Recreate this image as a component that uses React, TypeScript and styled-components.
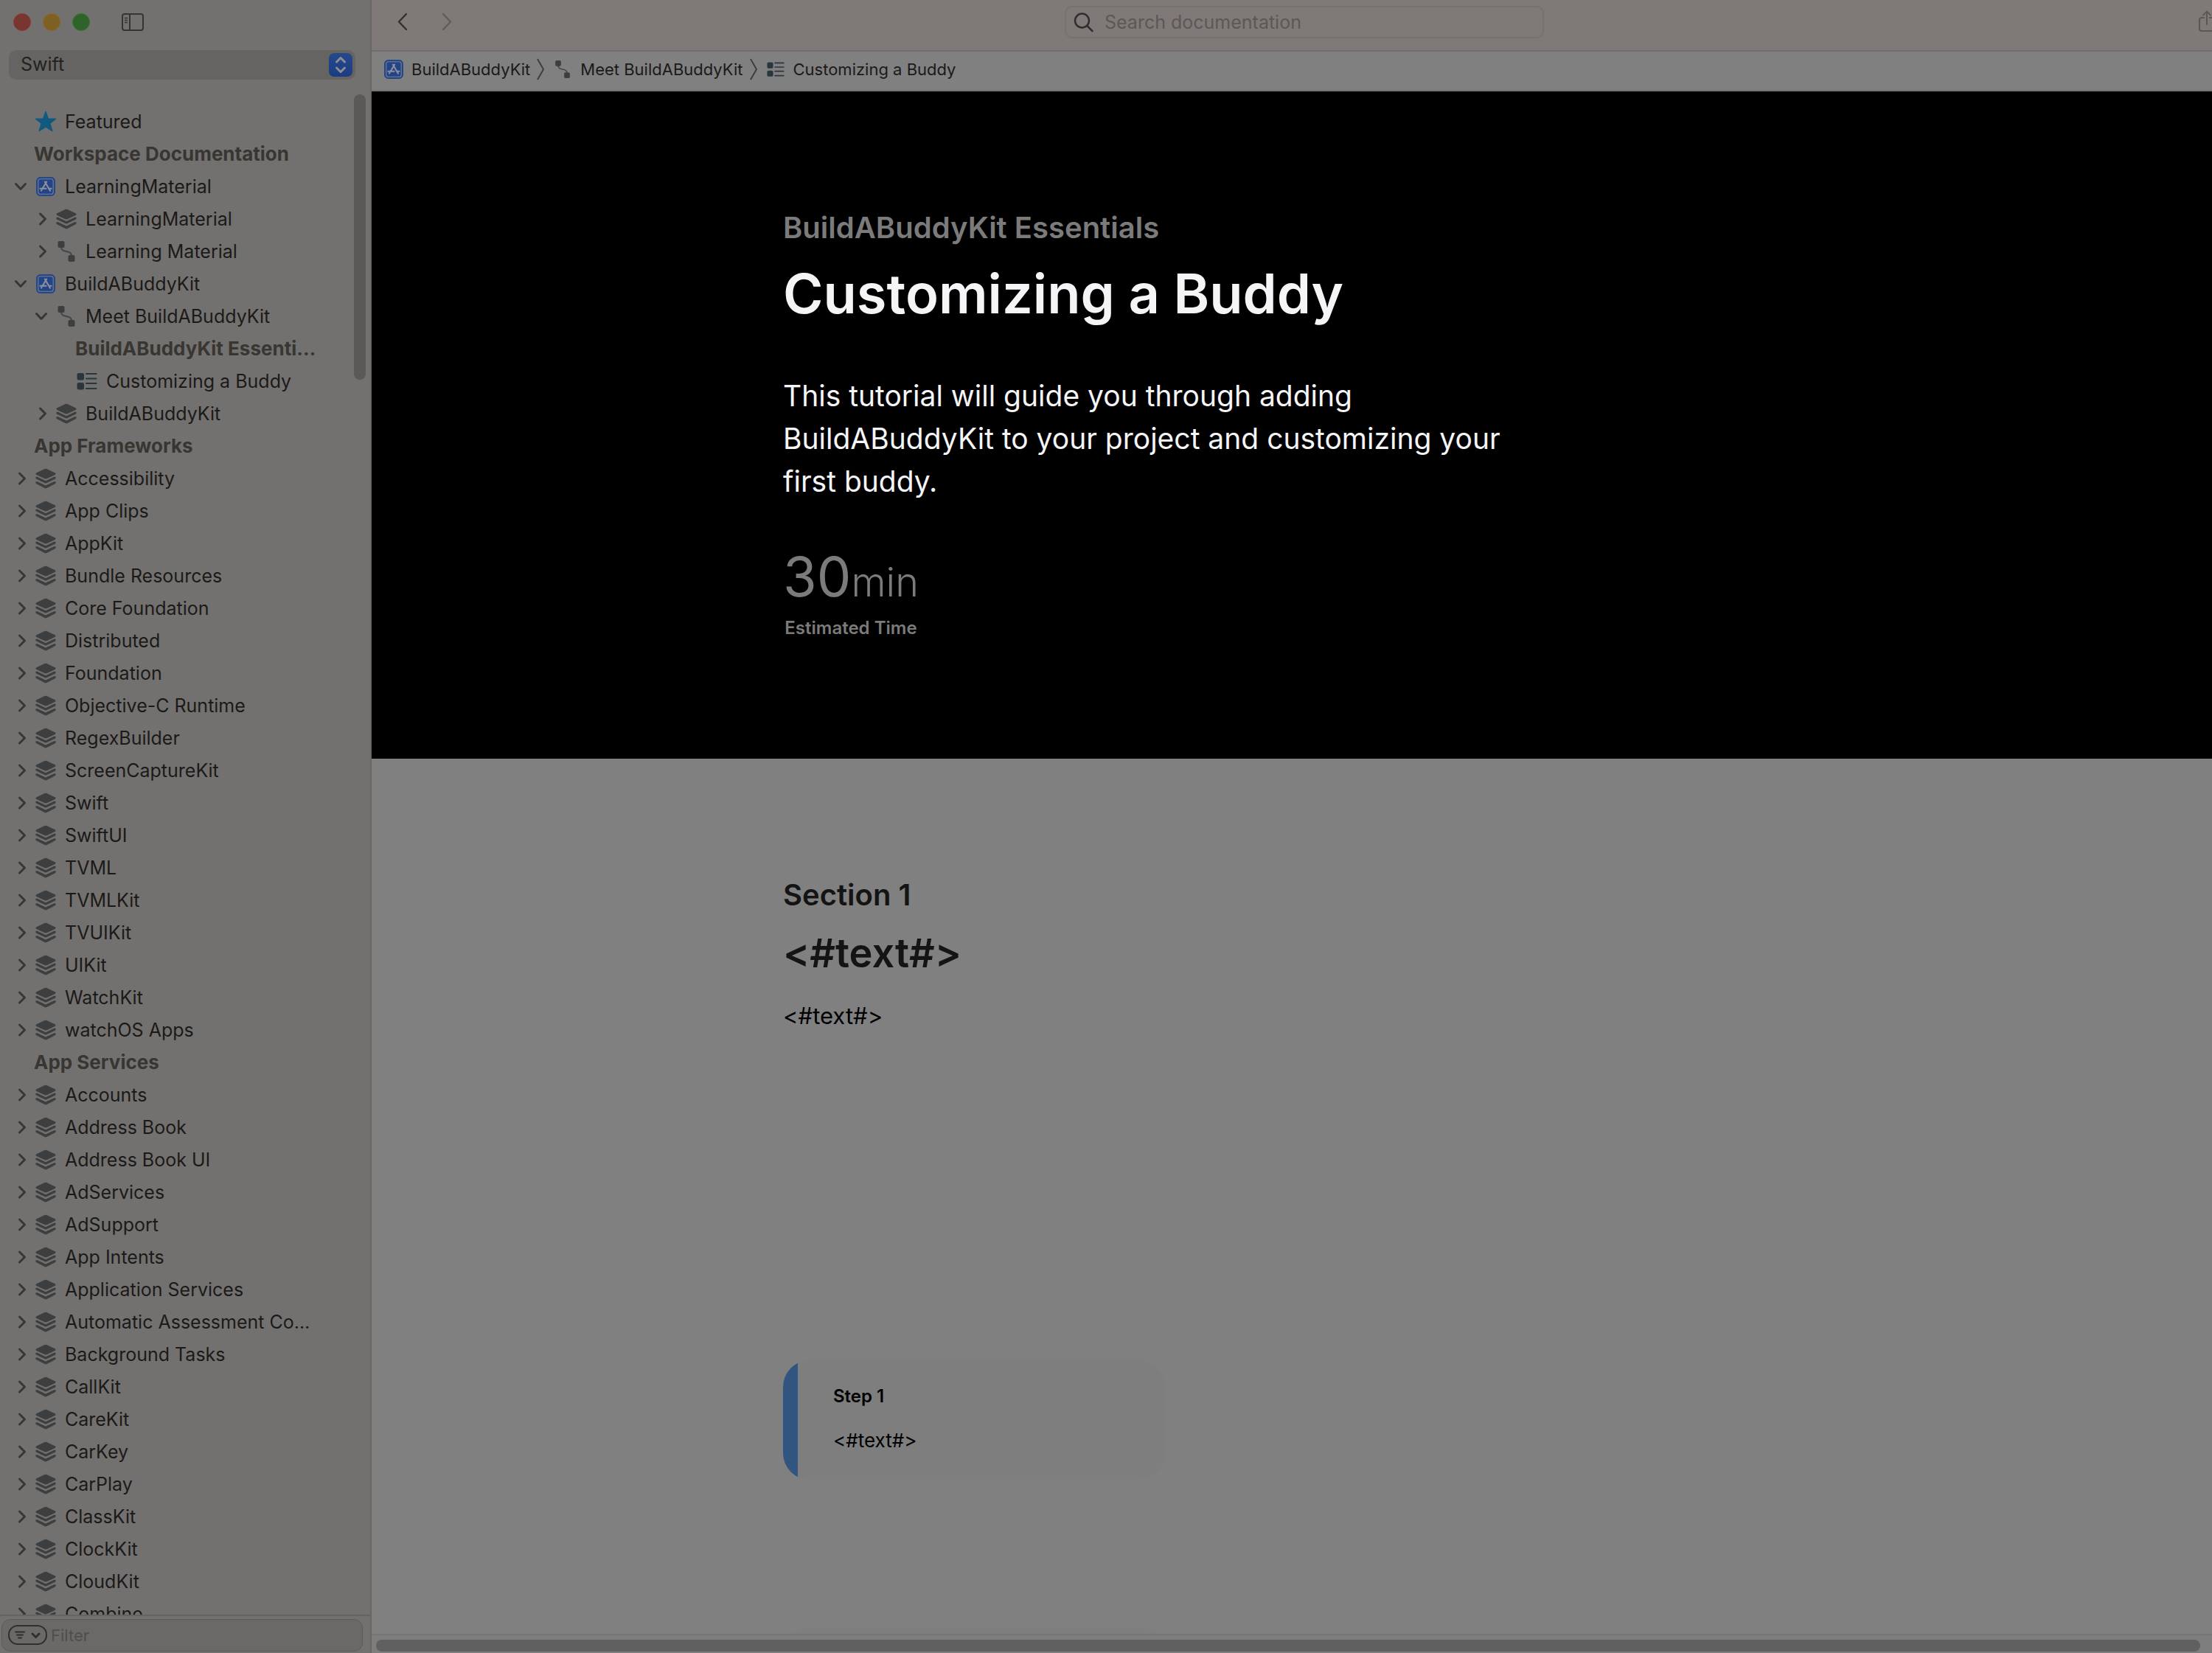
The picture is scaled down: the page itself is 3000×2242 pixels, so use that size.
import React from "react";
import styled, { createGlobalStyle } from "styled-components";

const GlobalStyle = createGlobalStyle`
  *, *::before, *::after { box-sizing: border-box; }
  html, body, #root { height: 100%; }
  body {
    margin: 0;
    overflow: hidden;
    background: #808080;
    color: #1b1a19;
    font-family: Inter, "Liberation Sans", sans-serif;
    font-size: 25px;
  }
  button, input, select { font: inherit; color: inherit; }
  h1, h2, h3, p, ul { margin: 0; padding: 0; }
`;

/* ---------- shell ---------- */

const Window = styled.div`
  display: grid;
  grid-template-columns: 504px minmax(0, 1fr);
  height: 100vh;
`;

const Sidebar = styled.aside`
  display: flex;
  flex-direction: column;
  min-height: 0;
  background: #73716f;
  border-right: 2px solid #6b6561;
`;

const Main = styled.main`
  display: flex;
  flex-direction: column;
  min-width: 0;
  min-height: 0;
  overflow: hidden;
`;

const PlainButton = styled.button`
  display: flex;
  align-items: center;
  justify-content: center;
  padding: 0;
  border: 0;
  background: none;
`;

/* ---------- sidebar ---------- */

const TitleBar = styled.div`
  display: flex;
  flex: none;
  align-items: center;
  gap: 16px;
  height: 60px;
  padding-left: 18px;
`;

const Light = styled.button<{ $fill: string; $rim: string }>`
  width: 24px;
  height: 24px;
  padding: 0;
  border: 1px solid ${(p) => p.$rim};
  border-radius: 50%;
  background: ${(p) => p.$fill};
`;

const ToggleButton = styled(PlainButton)`
  margin-left: 27px;
`;

const LanguagePicker = styled.label`
  position: relative;
  display: block;
  flex: none;
  margin: 8px 20px 0 12px;
`;

const LanguageSelect = styled.select`
  display: block;
  width: 100%;
  height: 40px;
  padding: 0 44px 2px 16px;
  border: 0;
  border-radius: 10px;
  appearance: none;
  background: #666462;
  color: #23221f;
`;

const PickerBadge = styled.span`
  position: absolute;
  top: 4px;
  right: 4px;
  display: grid;
  place-items: center;
  width: 32px;
  height: 32px;
  border-radius: 7px;
  background: linear-gradient(#26498a, #1b3c82);
  pointer-events: none;
`;

const ListArea = styled.nav`
  position: relative;
  flex: 1;
  min-height: 0;
  margin-top: 20px;
  padding-top: 15px;
  overflow: hidden;
`;

const VerticalThumb = styled.div`
  position: absolute;
  top: 0;
  right: 6px;
  width: 16px;
  height: 387px;
  border-radius: 8px;
  background: #5a5957;
`;

const List = styled.ul`
  list-style: none;
`;

const GroupTitle = styled.li<{ $level: number }>`
  height: 44px;
  padding-left: ${(p) => 46 + p.$level * 28}px;
  color: #393531;
  font-size: 26px;
  font-weight: 700;
  line-height: 44px;
  white-space: nowrap;
`;

const Row = styled.li<{ $level: number }>`
  display: flex;
  align-items: center;
  height: 44px;
  padding-left: ${(p) => 16 + p.$level * 28}px;
  line-height: 44px;
  white-space: nowrap;
`;

const Disclosure = styled(PlainButton)`
  width: 28px;
  height: 28px;
`;

const IconSlot = styled.span`
  display: flex;
  align-items: center;
  justify-content: center;
  width: 36px;
  margin-right: 8px;
`;

const Spacer = styled.span`
  width: 28px;
`;

const RowLink = styled.a`
  color: inherit;
  text-decoration: none;
`;

const FilterBar = styled.div`
  flex: none;
  padding: 4px 10px 2px 2px;
  border-top: 2px solid #666462;
`;

const FilterField = styled.div`
  display: flex;
  align-items: center;
  gap: 4px;
  height: 44px;
  padding-left: 8px;
  border: 1px solid #5d5b59;
  border-radius: 12px;
  background: #6b6967;
`;

const FilterInput = styled.input`
  flex: 1;
  min-width: 0;
  padding: 0;
  border: 0;
  outline: 0;
  background: none;
  font-size: 22px;
  &::placeholder { color: #504e4c; opacity: 1; }
`;

/* ---------- toolbar and path ---------- */

const Toolbar = styled.header`
  display: flex;
  flex: none;
  align-items: center;
  height: 70px;
  padding: 0 0 8px 34px;
  border-bottom: 2px solid #6f6e6e;
  background: #7f7a77;
`;

const ToolGroup = styled.div<{ $end?: boolean }>`
  display: flex;
  flex: 1;
  justify-content: ${(p) => (p.$end ? "flex-end" : "flex-start")};
  gap: 44px;
`;

const ShareButton = styled(PlainButton)`
  margin-right: -14px;
`;

const SearchField = styled.div`
  display: flex;
  align-items: center;
  gap: 14px;
  width: 650px;
  height: 44px;
  padding: 0 10px;
  border: 2px solid #77726f;
  border-radius: 10px;
`;

const SearchInput = styled.input`
  flex: 1;
  min-width: 0;
  padding: 0;
  border: 0;
  outline: 0;
  background: none;
  &::placeholder { color: #5b5856; opacity: 1; }
`;

const PathBar = styled.nav`
  display: flex;
  flex: none;
  align-items: center;
  height: 54px;
  padding-left: 16px;
  padding-bottom: 4px;
  border-bottom: 2px solid #717273;
  background: #808080;
  font-size: 22px;
`;

const Crumb = styled.a`
  display: flex;
  align-items: center;
  gap: 10px;
  color: inherit;
  text-decoration: none;
`;

const CrumbIcon = styled.span`
  display: flex;
  justify-content: center;
  width: 28px;
`;

const CrumbGap = styled.span`
  display: flex;
  margin: 0 10px 0 8px;
`;

/* ---------- article ---------- */

const Article = styled.article`
  flex: 1;
  min-height: 0;
  overflow: hidden;
`;

const Hero = styled.section`
  height: 905px;
  padding: 156px 0 0 558px;
  background: #000;
`;

const Eyebrow = styled.p`
  color: #7b7b7b;
  font-size: 40px;
  font-weight: 600;
  line-height: 58px;
`;

const HeroTitle = styled.h1`
  margin-top: 12px;
  color: #f5f5f7;
  font-size: 74px;
  font-weight: 600;
  line-height: 96px;
`;

const Abstract = styled.p`
  max-width: 1000px;
  margin-top: 62px;
  color: #f5f5f7;
  font-size: 39px;
  line-height: 58px;
`;

const Duration = styled.dl`
  display: inline-flex;
  flex-direction: column-reverse;
  align-items: center;
  margin: 52px 0 0;
  color: #7b7b7b;
`;

const DurationValue = styled.dd`
  margin: 0;
  font-size: 74px;
  font-weight: 400;
  line-height: 96px;
`;

const DurationUnit = styled.span`
  font-size: 54px;
  font-weight: 300;
`;

const DurationLabel = styled.dt`
  font-size: 24px;
  font-weight: 600;
  line-height: 28px;
`;

const Section = styled.section`
  padding: 156px 0 0 558px;
`;

const SectionNumber = styled.p`
  color: #141414;
  font-size: 40px;
  font-weight: 600;
  line-height: 58px;
`;

const SectionTitle = styled.h2`
  margin-top: 16px;
  color: #141414;
  font-size: 54px;
  font-weight: 600;
  line-height: 68px;
`;

const SectionText = styled.p`
  margin-top: 26px;
  color: #000;
  font-size: 31px;
  line-height: 50px;
`;

const Steps = styled.div`
  display: flex;
  flex-direction: column;
  gap: 200px;
  width: 518px;
  margin-top: 442px;
`;

const StepCard = styled.div<{ $active?: boolean }>`
  min-height: 160px;
  padding: 30px 48px 32px 68px;
  border-radius: 36px;
  background: ${(p) => (p.$active ? "linear-gradient(to right, #32557f 20px, #7e7e7e 20px)" : "#7e7e7e")};
  color: #000;
`;

const StepTitle = styled.h3`
  font-size: 24px;
  font-weight: 600;
  line-height: 38px;
`;

const StepText = styled.p`
  margin-top: 20px;
  font-size: 26px;
  line-height: 42px;
`;

const HorizontalTrack = styled.div`
  flex: none;
  padding: 6px 16px 2px 6px;
  border-top: 2px solid #757575;
  background: #7d7d7d;
`;

const HorizontalThumb = styled.div`
  height: 16px;
  border-radius: 8px;
  background: #606060;
`;

/* ---------- icons ---------- */

const Chevron = ({ open }: { open?: boolean }) => (
  <svg width="20" height="20" viewBox="0 0 20 20" fill="none" stroke="#393735" strokeWidth="3" strokeLinecap="round" strokeLinejoin="round">
    {open ? <path d="M1.500 6.500 8 13.500 14.500 6.500" /> : <path d="M6.500 3 13.500 10 6.500 17" />}
  </svg>
);

const StarIcon = () => (
  <svg width="30" height="30" viewBox="0 0 30 30">
    <path
      d="M15 1.500 18.300 11 28.500 11.200 20.700 17.400 23.800 27.500 15 21.800 6.200 27.500 9.300 17.400 1.500 11.200 11.700 11Z"
      fill="#11597e"
      stroke="#11597e"
      strokeWidth="1.500"
      strokeLinejoin="round"
    />
  </svg>
);

const AppIcon = () => (
  <svg width="26" height="26" viewBox="0 0 26 26" fill="none">
    <rect x="0.500" y="0.500" width="25" height="25" rx="5" fill="#234487" stroke="#27488c" />
    <rect x="2.800" y="2.800" width="20.400" height="20.400" rx="2.800" stroke="#7a828f" strokeWidth="1.100" />
    <g stroke="#8d939c" strokeWidth="2" strokeLinecap="round">
      <path d="M14.200 6.500 8.800 15.500M7.600 17.600 7 18.600" />
      <path d="M11.800 6.500 19 18.800" />
      <path d="M5.400 15.700H13.600M17.600 15.700H20.600" />
    </g>
  </svg>
);

const StackIcon = () => (
  <svg width="28" height="28" viewBox="0 0 28 28" fill="#3c3e3f">
    <path d="M12.600 1.100Q14 .500 15.400 1.100L26.500 6.300Q28.600 7.600 26.500 8.900L15.800 14Q14 14.800 12.200 14L1.500 8.900Q-.600 7.600 1.500 6.300Z" />
    <path d="M.300 12.600Q1.400 11 3.200 12L14 17.200 24.800 12Q26.600 11 27.700 12.600 28 14 26.500 14.800L15.500 20.100Q14 20.800 12.500 20.100L1.500 14.800Q0 14 .300 12.600Z" />
    <path d="M.300 19Q1.400 17.400 3.200 18.400L14 23.600 24.800 18.400Q26.600 17.400 27.700 19 28 20.400 26.500 21.200L15.500 26.900Q14 27.600 12.500 26.900L1.500 21.200Q0 20.400 .300 19Z" />
  </svg>
);

const PathIcon = ({ size = 28 }: { size?: number }) => (
  <svg width={size} height={size} viewBox="0 0 28 28">
    <path d="M7 8C7 17 21 11 21 20" fill="none" stroke="#444647" strokeWidth="2" />
    <rect x="2.500" y="0" width="9" height="9" rx="2" fill="#3c3e3f" />
    <rect x="16.500" y="19" width="9" height="9" rx="2" fill="#3c3e3f" />
  </svg>
);

const TutorialIcon = ({ width = 28 }: { width?: number }) => (
  <svg width={width} height="24" viewBox="0 0 28 24">
    <rect x="0.500" y="1" width="9.500" height="9.500" rx="2.200" fill="#2a363e" />
    <rect x="0.500" y="14" width="9.500" height="9.500" rx="2.200" fill="#2a363e" />
    <path d="M13 2H26.500M13 8.500H26.500M13 15H26.500M13 22H26.500" stroke="#2a363e" strokeWidth="2" strokeLinecap="round" />
  </svg>
);

const SidebarIcon = () => (
  <svg width="30" height="24" viewBox="0 0 30 24" fill="none" stroke="#363432" strokeWidth="2">
    <rect x="1" y="1" width="28" height="22" rx="3" />
    <path d="M11 1V23" />
    <path d="M4 6.500H8M4 9.500H8M4 12.500H8" strokeWidth="1.300" />
  </svg>
);

const UpDownIcon = () => (
  <svg width="20" height="26" viewBox="0 0 20 26" fill="none" stroke="#8b8f95" strokeWidth="3" strokeLinecap="round" strokeLinejoin="round">
    <path d="M4.500 9 10 3.500 15.500 9M4.500 17 10 22.500 15.500 17" />
  </svg>
);

const FilterIcon = () => (
  <svg width="54" height="28" viewBox="0 0 54 28" fill="none" stroke="#302f2d" strokeWidth="2" strokeLinecap="round">
    <rect x="1" y="1" width="51" height="25" rx="12" />
    <path d="M10 9.500H22M12 13.500H20M14 17.500H18" />
    <path d="M33 12 37.500 16.500 42 12" strokeWidth="3" strokeLinejoin="round" />
  </svg>
);

const NavIcon = ({ forward }: { forward?: boolean }) => (
  <svg width="16" height="26" viewBox="0 0 16 26" fill="none" stroke={forward ? "#605c5a" : "#322f2d"} strokeWidth="2.400" strokeLinecap="round" strokeLinejoin="round">
    {forward ? <path d="M3 2 13 12.500 3 23" /> : <path d="M13 2 3 12.500 13 23" />}
  </svg>
);

const SearchIcon = () => (
  <svg width="28" height="28" viewBox="0 0 28 28" fill="none" stroke="#302e2d" strokeWidth="2.500" strokeLinecap="round">
    <circle cx="11.500" cy="12" r="9.500" />
    <path d="M18.500 19.200 25.500 26.200" />
  </svg>
);

const ShareIcon = () => (
  <svg width="32" height="32" viewBox="0 0 32 32" fill="none" stroke="#5a5755" strokeWidth="2" strokeLinecap="round" strokeLinejoin="round">
    <path d="M7 10H4Q1 10 1 13V25Q1 28 4 28H18Q21 28 21 25V13Q21 10 18 10H15" />
    <path d="M11 19V1.500M6 6.500 11 1.500 16 6.500" />
  </svg>
);

const CrumbArrow = () => (
  <svg width="12" height="30" viewBox="0 0 12 30" fill="none" stroke="#3e3e3e" strokeWidth="2">
    <path d="M2 1 10 15 2 29" />
  </svg>
);

/* ---------- data ---------- */

type IconName = "star" | "app" | "stack" | "path" | "tutorial";

type Entry =
  | { kind: "group"; label: string; level: number }
  | { kind: "row"; label: string; level: number; icon: IconName; state: "open" | "closed" | "leaf" };

const group = (label: string, level = 0): Entry => ({ kind: "group", label, level });
const row = (label: string, icon: IconName = "stack", state: "open" | "closed" | "leaf" = "closed", level = 0): Entry => ({
  kind: "row",
  label,
  level,
  icon,
  state,
});

const frameworks = [
  "Accessibility", "App Clips", "AppKit", "Bundle Resources", "Core Foundation", "Distributed", "Foundation",
  "Objective-C Runtime", "RegexBuilder", "ScreenCaptureKit", "Swift", "SwiftUI", "TVML", "TVMLKit", "TVUIKit",
  "UIKit", "WatchKit", "watchOS Apps",
];

const services = [
  "Accounts", "Address Book", "Address Book UI", "AdServices", "AdSupport", "App Intents", "Application Services",
  "Automatic Assessment Co…", "Background Tasks", "CallKit", "CareKit", "CarKey", "CarPlay", "ClassKit", "ClockKit",
  "CloudKit", "Combine",
];

const entries: Entry[] = [
  row("Featured", "star", "leaf"),
  group("Workspace Documentation"),
  row("LearningMaterial", "app", "open"),
  row("LearningMaterial", "stack", "closed", 1),
  row("Learning Material", "path", "closed", 1),
  row("BuildABuddyKit", "app", "open"),
  row("Meet BuildABuddyKit", "path", "open", 1),
  group("BuildABuddyKit Essenti…", 2),
  row("Customizing a Buddy", "tutorial", "leaf", 2),
  row("BuildABuddyKit", "stack", "closed", 1),
  group("App Frameworks"),
  ...frameworks.map((name) => row(name)),
  group("App Services"),
  ...services.map((name) => row(name)),
];

const icons: Record<IconName, React.ReactElement> = {
  star: <StarIcon />,
  app: <AppIcon />,
  stack: <StackIcon />,
  path: <PathIcon />,
  tutorial: <TutorialIcon />,
};

export default function App() {
  return (
    <>
      <GlobalStyle />
      <Window>
        <Sidebar>
          <TitleBar>
            <Light $fill="#79352f" $rim="#8a3a36" aria-label="Close" />
            <Light $fill="#7f6024" $rim="#8c6825" aria-label="Minimize" />
            <Light $fill="#2f6329" $rim="#2f7a2c" aria-label="Zoom" />
            <ToggleButton aria-label="Toggle sidebar">
              <SidebarIcon />
            </ToggleButton>
          </TitleBar>
          <LanguagePicker>
            <LanguageSelect aria-label="Language" defaultValue="Swift">
              <option>Swift</option>
            </LanguageSelect>
            <PickerBadge>
              <UpDownIcon />
            </PickerBadge>
          </LanguagePicker>
          <ListArea aria-label="Documentation">
            <List>
              {entries.map((entry, index) =>
                entry.kind === "group" ? (
                  <GroupTitle key={index} $level={entry.level}>
                    {entry.label}
                  </GroupTitle>
                ) : (
                  <Row key={index} $level={entry.level}>
                    {entry.state === "leaf" ? (
                      <Spacer />
                    ) : (
                      <Disclosure aria-label={`Toggle ${entry.label}`} aria-expanded={entry.state === "open"}>
                        <Chevron open={entry.state === "open"} />
                      </Disclosure>
                    )}
                    <IconSlot>{icons[entry.icon]}</IconSlot>
                    <RowLink href="#">{entry.label}</RowLink>
                  </Row>
                )
              )}
            </List>
            <VerticalThumb />
          </ListArea>
          <FilterBar>
            <FilterField>
              <PlainButton aria-label="Filter options">
                <FilterIcon />
              </PlainButton>
              <FilterInput aria-label="Filter" placeholder="Filter" />
            </FilterField>
          </FilterBar>
        </Sidebar>
        <Main>
          <Toolbar>
            <ToolGroup>
              <PlainButton aria-label="Back">
                <NavIcon />
              </PlainButton>
              <PlainButton aria-label="Forward">
                <NavIcon forward />
              </PlainButton>
            </ToolGroup>
            <SearchField>
              <SearchIcon />
              <SearchInput aria-label="Search documentation" placeholder="Search documentation" />
            </SearchField>
            <ToolGroup $end>
              <ShareButton aria-label="Share">
                <ShareIcon />
              </ShareButton>
            </ToolGroup>
          </Toolbar>
          <PathBar aria-label="Breadcrumb">
            <Crumb href="#">
              <CrumbIcon>
                <AppIcon />
              </CrumbIcon>
              BuildABuddyKit
            </Crumb>
            <CrumbGap>
              <CrumbArrow />
            </CrumbGap>
            <Crumb href="#">
              <CrumbIcon>
                <PathIcon size={24} />
              </CrumbIcon>
              Meet BuildABuddyKit
            </Crumb>
            <CrumbGap>
              <CrumbArrow />
            </CrumbGap>
            <Crumb href="#">
              <CrumbIcon>
                <TutorialIcon width={24} />
              </CrumbIcon>
              Customizing a Buddy
            </Crumb>
          </PathBar>
          <Article>
            <Hero>
              <Eyebrow>BuildABuddyKit Essentials</Eyebrow>
              <HeroTitle>Customizing a Buddy</HeroTitle>
              <Abstract>
                This tutorial will guide you through adding BuildABuddyKit to your project and customizing your first
                buddy.
              </Abstract>
              <Duration>
                <DurationLabel>Estimated Time</DurationLabel>
                <DurationValue>
                  30<DurationUnit>min</DurationUnit>
                </DurationValue>
              </Duration>
            </Hero>
            <Section>
              <SectionNumber>Section 1</SectionNumber>
              <SectionTitle>{"<#text#>"}</SectionTitle>
              <SectionText>{"<#text#>"}</SectionText>
              <Steps>
                <StepCard $active>
                  <StepTitle>Step 1</StepTitle>
                  <StepText>{"<#text#>"}</StepText>
                </StepCard>
                <StepCard />
              </Steps>
            </Section>
          </Article>
          <HorizontalTrack>
            <HorizontalThumb />
          </HorizontalTrack>
        </Main>
      </Window>
    </>
  );
}
